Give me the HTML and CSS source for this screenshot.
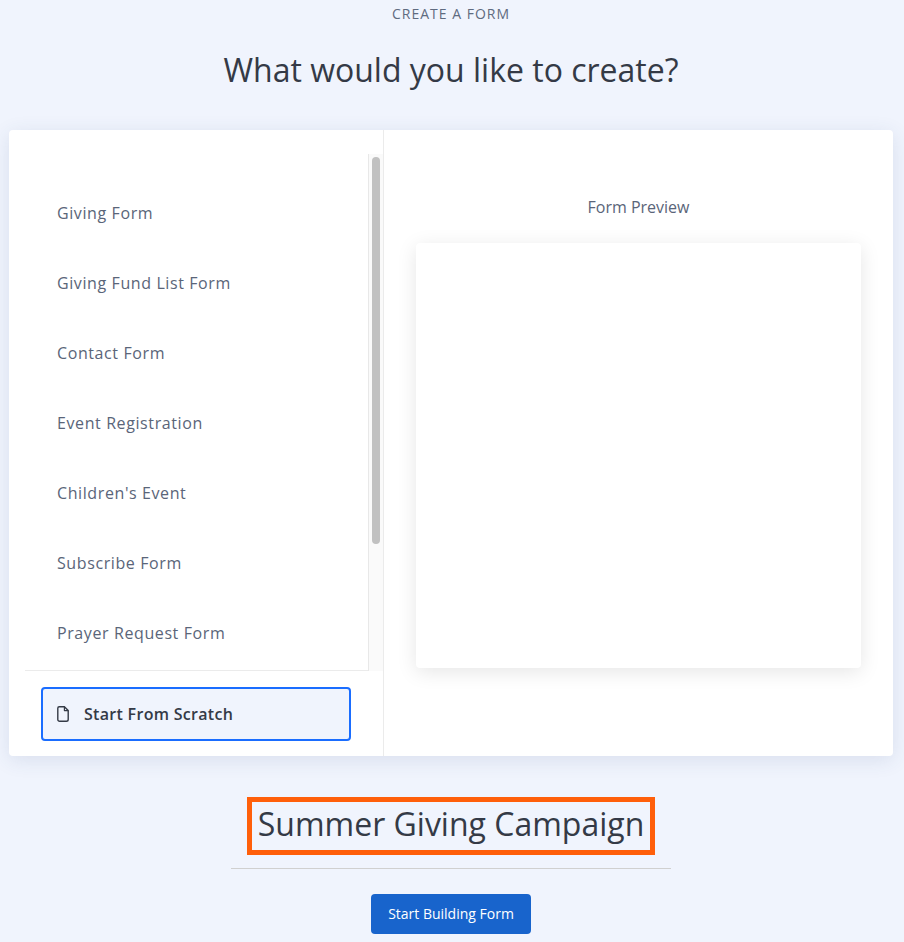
FILE: index.html
```html
<!DOCTYPE html>
<html lang="en">
<head>
    <meta charset="UTF-8">
    <meta name="viewport" content="width=device-width, initial-scale=1.0">
    <title>Create a Form</title>
    <link rel="stylesheet" href="styles.css">
</head>
<body>
    <div class="page">
        <p class="eyebrow">CREATE A FORM</p>
        <h1 class="page-title">What would you like to create?</h1>

        <div class="picker-card">
            <div class="picker-left">
                <div class="template-scroll">
                    <ul class="template-list">
                        <li>Giving Form</li>
                        <li>Giving Fund List Form</li>
                        <li>Contact Form</li>
                        <li>Event Registration</li>
                        <li>Children's Event</li>
                        <li>Subscribe Form</li>
                        <li>Prayer Request Form</li>
                    </ul>
                    <div class="scroll-track">
                        <div class="scroll-thumb"></div>
                    </div>
                </div>
                <div class="scratch-area">
                    <div class="scratch-btn">
                        <!-- file icon -->
                        <svg class="file-icon" viewBox="0 0 12 16" width="12" height="16">
                            <path d="M2.2.8H7.4L11.2 4.6V13.4A1.8 1.8 0 0 1 9.4 15.2H2.6A1.8 1.8 0 0 1 .8 13.4V2.2A1.4 1.4 0 0 1 2.2.8Z" fill="none" stroke="#343a46" stroke-width="1.4" stroke-linejoin="round"/>
                            <path d="M7.4.8V4.6H11.2" fill="none" stroke="#343a46" stroke-width="1.2" stroke-linejoin="round"/>
                        </svg>
                        <span>Start From Scratch</span>
                    </div>
                </div>
            </div>
            <div class="picker-right">
                <p class="preview-label">Form Preview</p>
                <div class="preview-box"></div>
            </div>
        </div>

        <div class="name-row">
            <h2 class="form-name">Summer Giving Campaign</h2>
        </div>
        <hr class="divider">
        <button class="build-btn">Start Building Form</button>
    </div>
</body>
</html>
```

FILE: styles.css
```css
html, body {
    height: 100%;
}

body {
    font-family: "Open Sans", sans-serif;
    margin: 0;
    background-color: #f0f4fd;
    color: #343a46;
    overflow: hidden;
}

.page {
    display: flex;
    flex-direction: column;
    align-items: center;
    padding: 0 11px 0 9px;
}

.eyebrow {
    font-size: 14px;
    line-height: 18px;
    letter-spacing: 1px;
    color: #5f6b80;
    margin: 5px 0 0;
}

.page-title {
    font-size: 32px;
    line-height: 44px;
    font-weight: 400;
    margin: 25px 0 0;
}

.picker-card {
    display: flex;
    align-self: stretch;
    height: 626px;
    margin-top: 38px;
    background-color: #fff;
    border-radius: 4px;
    box-shadow: 0 4px 20px rgba(50, 70, 120, 0.12);
}

.picker-left {
    width: 375px;
    box-sizing: border-box;
    display: flex;
    flex-direction: column;
    border-right: 1px solid #ebebeb;
}

.template-scroll {
    display: flex;
    height: 517px;
    margin-top: 24px;
    padding-left: 16px;
}

.template-list {
    flex: 1;
    list-style: none;
    margin: 0;
    padding: 48px 0 0 32px;
    overflow: hidden;
    border-bottom: 1px solid #ebebeb;
}

.template-list li {
    font-size: 16px;
    line-height: 22px;
    height: 70px;
    letter-spacing: 0.6px;
    color: #5a6579;
}

.scroll-track {
    width: 15px;
    background-color: #fafafa;
    border-left: 1px solid #e8e8e8;
    box-sizing: border-box;
    padding: 3px 3px 0;
}

.scroll-thumb {
    height: 387px;
    background-color: #c1c1c1;
    border-radius: 4px;
}

.scratch-area {
    padding: 16px 32px 0;
}

.scratch-btn {
    display: flex;
    align-items: center;
    gap: 15px;
    height: 54px;
    box-sizing: border-box;
    padding-left: 14px;
    background-color: #f0f4fd;
    border: 2px solid #1a6dff;
    border-radius: 4px;
    font-size: 16px;
    font-weight: 600;
    letter-spacing: 0.3px;
}

.picker-right {
    flex: 1;
    padding: 66px 32px 0;
    display: flex;
    flex-direction: column;
}

.preview-label {
    font-size: 16px;
    line-height: 22px;
    color: #5a6579;
    text-align: center;
    margin: 0;
}

.preview-box {
    height: 425px;
    margin-top: 25px;
    background-color: #fff;
    border-radius: 4px;
    box-shadow: 0 4px 20px rgba(0, 0, 0, 0.1);
}

.name-row {
    margin-top: 41px;
    border: 5px solid #ff5f0a;
    padding: 0 6px;
}

.form-name {
    font-size: 32px;
    line-height: 44px;
    font-weight: 400;
    margin: 0 0 4px;
    white-space: nowrap;
}

.divider {
    width: 440px;
    height: 1px;
    border: none;
    background-color: #d0d0d0;
    margin: 13px 0 0;
}

.build-btn {
    width: 160px;
    height: 40px;
    margin-top: 25px;
    padding-bottom: 3px;
    font-family: "Open Sans", sans-serif;
    font-size: 14px;
    font-weight: 500;
    color: #fff;
    background-color: #1864cc;
    border: none;
    border-radius: 4px;
}
```
